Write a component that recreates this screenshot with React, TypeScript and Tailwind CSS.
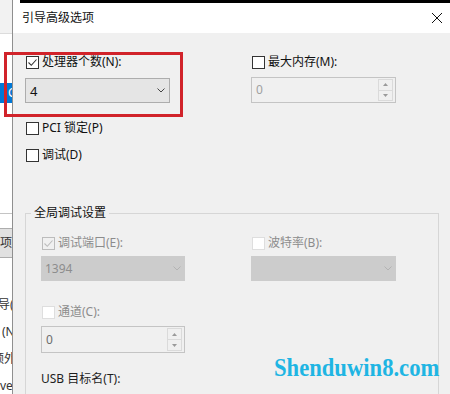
import React from "react";

function Check({ checked = false, disabled = false }: { checked?: boolean; disabled?: boolean }) {
    const box = disabled
        ? checked
            ? "border-[#bcbcbc] bg-[#f0f0f0]"
            : "border-[#dedede] bg-white"
        : "border-[#333333] bg-white";
    return (
        <span className={`w-[13px] h-[13px] border ${box} flex items-center justify-center shrink-0`}>
            {checked && (
                <svg width="11" height="11" viewBox="0 0 11 11">
                    <path
                        d="M1.5 5.5 L4.3 8.3 L9.5 2.5"
                        fill="none"
                        stroke={disabled ? "#bcbcbc" : "#333333"}
                        strokeWidth="1.1"
                    />
                </svg>
            )}
        </span>
    );
}

function CheckRow({
    label,
    checked,
    disabled,
    className = "",
}: {
    label: string;
    checked?: boolean;
    disabled?: boolean;
    className?: string;
}) {
    return (
        <div className={`flex items-center h-[16px] gap-[3px] pl-px ${className}`}>
            <Check checked={checked} disabled={disabled} />
            <span className={disabled ? "text-[#8c8c8c]" : "text-[#111]"}>{label}</span>
        </div>
    );
}

function Chevron({ color }: { color: string }) {
    return (
        <svg width="8" height="5" viewBox="0 0 8 5">
            <path d="M0.5 0.5 L4 4 L7.5 0.5" fill="none" stroke={color} strokeWidth="1" />
        </svg>
    );
}

function Select({ value, disabled = false, className = "" }: { value: string; disabled?: boolean; className?: string }) {
    return (
        <div
            className={`flex items-center justify-between h-[25px] border ${
                disabled ? "bg-[#cccccc] border-[#cccccc] text-[#8d8d8d] pl-[3px] pr-[3px]" : "bg-[#e5e5e5] border-[#adadad] text-[#111] pl-[4px] pr-[4px]"
            } ${className}`}
        >
            <span className={disabled ? "" : "text-[13px]"}>{value}</span>
            <Chevron color={disabled ? "#b3b3b3" : "#444"} />
        </div>
    );
}

function Tri({ up }: { up?: boolean }) {
    return (
        <svg width="5" height="3" viewBox="0 0 5 3">
            <path d={up ? "M0 3 L2.5 0 L5 3 Z" : "M0 0 L2.5 3 L5 0 Z"} fill="#9a9a9a" />
        </svg>
    );
}

function Spinner({ value, textColor, className = "" }: { value: string; textColor: string; className?: string }) {
    return (
        <div className={`flex items-stretch h-[26px] border border-[#c4c4c4] bg-[#f0f0f0] ${className}`}>
            <span className={`flex-1 flex items-center pl-[4px] ${textColor}`}>{value}</span>
            <div className="w-[15px] my-[1px] mr-[2px] border border-[#dadada] flex flex-col">
                <div className="flex-1 flex items-center justify-center border-b border-[#dadada]">
                    <Tri up />
                </div>
                <div className="flex-1 flex items-center justify-center">
                    <Tri />
                </div>
            </div>
        </div>
    );
}

export default function App() {
    return (
        <div className="relative w-[450px] h-[394px] overflow-hidden flex bg-white text-[12px] leading-[16px] font-['Noto_Sans','Noto_Sans_CJK_SC',sans-serif]">
            {/* Background window peeking out on the left */}
            <div className="w-[12px] shrink-0 flex flex-col bg-white text-[#333] whitespace-nowrap overflow-hidden">
                <div className="h-[34px] shrink-0 bg-[#f2f2f2] border-b border-[#dcdcdc]" />
                <div className="h-[49px] shrink-0" />
                <div className="h-[20px] shrink-0 bg-[#0078d7] text-white pl-[8px] flex items-center">C</div>
                <div className="h-[110px] shrink-0" />
                <div className="h-[15px] shrink-0 border-t border-[#c4c4c4]" />
                <div className="h-[30px] shrink-0 bg-[#e1e1e1] border-y border-[#adadad] flex items-center">项(</div>
                <div className="h-[33px] shrink-0" />
                <div className="h-[27px] shrink-0 leading-[27px] -ml-[2px]">导(</div>
                <div className="h-[27px] shrink-0 leading-[27px] pl-[2px]">(N</div>
                <div className="h-[27px] shrink-0 leading-[27px] -ml-[8px]">额外</div>
                <div className="h-[27px] shrink-0 leading-[27px]">ve</div>
            </div>

            {/* Dialog */}
            <div className="flex-1 flex flex-col border-l border-[#8f8f8f]">
                <div className="h-[3px] shrink-0 flex">
                    <div className="w-[7px] bg-white" />
                    <div className="flex-1 bg-black" />
                </div>
                <div className="h-[30px] shrink-0 bg-white flex items-center justify-between pl-[9px] pr-[8px]">
                    <span className="text-[#111]">引导高级选项</span>
                    <svg width="10" height="10" viewBox="0 0 10 10">
                        <path d="M0 0 L10 10 M10 0 L0 10" stroke="#111" strokeWidth="1" />
                    </svg>
                </div>

                <div className="flex-1 shrink-0 bg-[#f0f0f0] pl-[12px] pt-[21px]">
                    <div className="flex">
                        <div className="w-[145px]">
                            <CheckRow label="处理器个数(N):" checked />
                            <Select value="4" className="mt-[8px] h-[24px]" />
                        </div>
                        <div className="w-[145px] ml-[81px]">
                            <CheckRow label="最大内存(M):" />
                            <Spinner value="0" textColor="text-[#a0a0a0]" className="mt-[7px]" />
                        </div>
                    </div>

                    <CheckRow label="PCI 锁定(P)" className="mt-[17px]" />
                    <CheckRow label="调试(D)" className="mt-[11px]" />

                    <fieldset className="mt-[42px] w-[414px] h-[260px] border border-[#d6d6d6]">
                        <legend className="ml-[5px] px-[3px] text-[#111]">全局调试设置</legend>
                        <div className="pt-[14px] pl-[15px]">
                            <div className="flex">
                                <div className="w-[144px]">
                                    <CheckRow label="调试端口(E):" checked disabled />
                                    <Select value="1394" disabled className="mt-[5px]" />
                                </div>
                                <div className="w-[145px] ml-[66px]">
                                    <CheckRow label="波特率(B):" disabled />
                                    <Select value="" disabled className="mt-[5px]" />
                                </div>
                            </div>
                            <div className="w-[144px]">
                                <CheckRow label="通道(C):" disabled className="mt-[23px]" />
                                <Spinner value="0" textColor="text-[#6d6d6d]" className="mt-[6px] h-[27px]" />
                            </div>
                            <div className="mt-[18px] text-[#1e1e1e]">USB 目标名(T):</div>
                        </div>
                    </fieldset>
                </div>
            </div>

            {/* Annotation and watermark over the screenshot */}
            <div className="absolute left-[4px] top-[52px] w-[179px] h-[65px] border-[3px] border-[#d1232a]" />
            <div className="absolute left-[274px] top-[355px] origin-left scale-x-[0.87] text-[26px] leading-none font-bold text-[#1fb5e3] font-['Liberation_Serif',serif] whitespace-nowrap">
                Shenduwin8.com
            </div>
        </div>
    );
}
